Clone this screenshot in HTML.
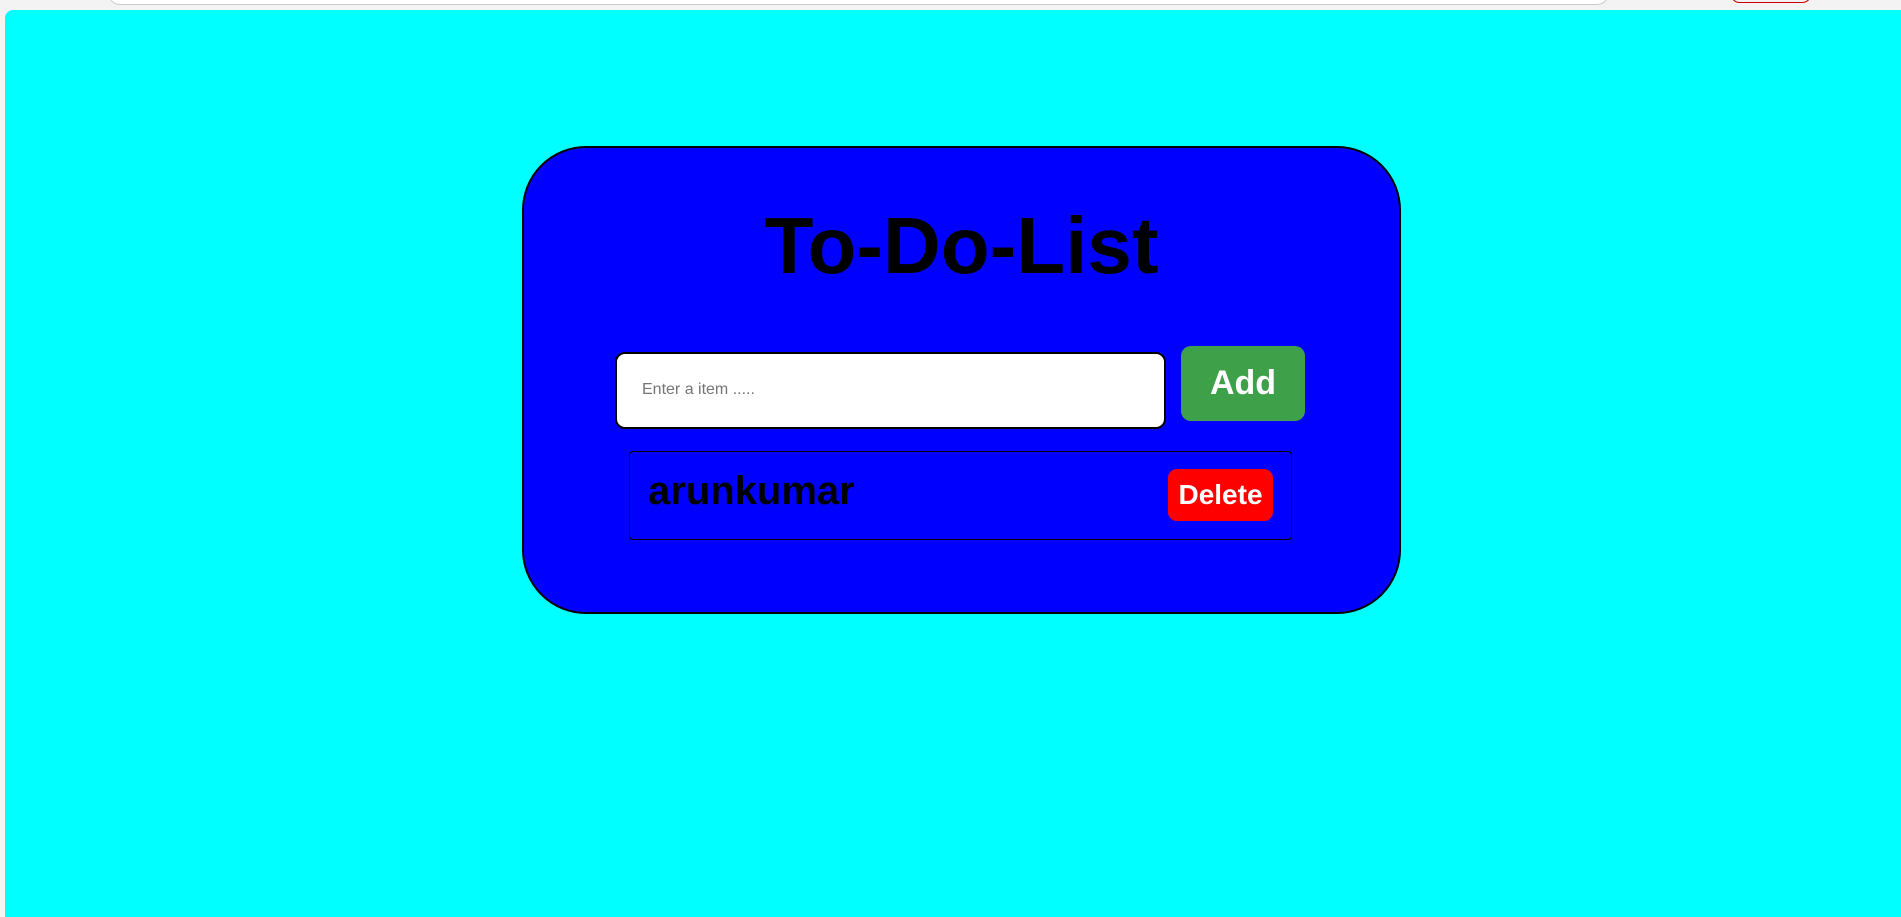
<!DOCTYPE html>
<html><head><style>
html,body{margin:0;padding:0;width:1901px;height:917px;overflow:hidden;background:#f3f3f3;font-family:"Liberation Sans",Arial,sans-serif;}
.search{position:absolute;left:108px;top:-20px;width:1499px;height:23px;border:1px solid #ccc;border-radius:12px;background:#fff;}
.redb{position:absolute;left:1730px;top:-20px;width:80px;height:21px;border:1.5px solid #c00;border-radius:10px;}
.page{position:absolute;left:5px;top:10px;width:1896px;height:907px;background:#00ffff;border-top-left-radius:8px;}
.card{position:absolute;left:522px;top:146px;width:875px;height:464px;background:#0000ff;border:2px solid #000;border-radius:64px;}
h1{position:absolute;left:522px;width:879px;top:196px;margin:0;text-align:center;font-size:80px;font-weight:bold;color:#000;line-height:100px;}
.input{position:absolute;left:615px;top:352px;width:547px;height:73px;background:#fff;border:2px solid #000;border-radius:10px;}
.input span{position:absolute;left:25px;top:27px;font-size:16px;color:#757575;}
.add{position:absolute;left:1181px;top:346px;width:124px;height:75px;background:#3fa04a;border-radius:10px;color:#fff;font-weight:bold;font-size:34px;text-align:center;line-height:75px;}
.item{position:absolute;left:629px;top:451px;width:661px;height:87px;border:1px solid #000;border-radius:4px;}
.item .t{position:absolute;left:18px;top:17px;font-size:40px;font-weight:bold;color:#000;}
.del{position:absolute;left:1168px;top:469px;width:105px;height:52px;background:#ff0000;border-radius:9px;color:#fff;font-weight:bold;font-size:28px;text-align:center;line-height:52px;}
</style></head><body>
<div class="search"></div><div class="redb"></div>
<div class="page"></div>
<div class="card"></div>
<h1>To-Do-List</h1>
<div class="input"><span>Enter a item .....</span></div>
<div class="add">Add</div>
<div class="item"><span class="t">arunkumar</span></div>
<div class="del">Delete</div>
</body></html>
